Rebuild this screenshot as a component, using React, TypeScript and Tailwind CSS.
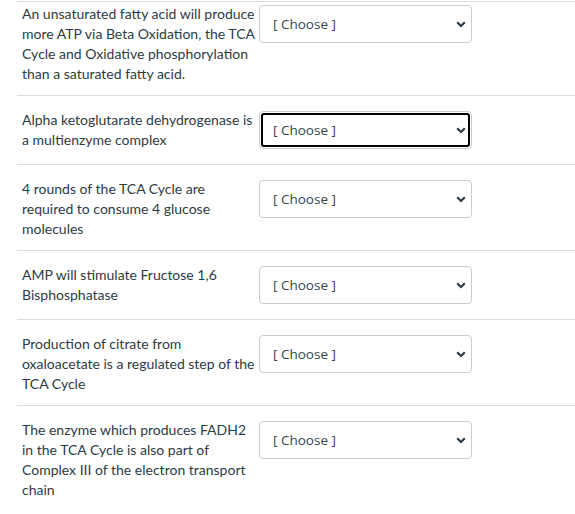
import React from "react";

const rows = [
  { text: "An unsaturated fatty acid will produce more ATP via Beta Oxidation, the TCA Cycle and Oxidative phosphorylation than a saturated fatty acid.", first: true },
  { text: "Alpha ketoglutarate dehydrogenase is a multienzyme complex", focus: true },
  { text: "4 rounds of the TCA Cycle are required to consume 4 glucose molecules" },
  { text: "AMP will stimulate Fructose 1,6 Bisphosphatase" },
  { text: "Production of citrate from oxaloacetate is a regulated step of the TCA Cycle" },
  { text: "The enzyme which produces FADH2 in the TCA Cycle is also part of Complex III of the electron transport chain" },
];

function Select({ focus }: { focus?: boolean }) {
  return (
    <div className="relative mt-px mb-[4px] h-[38px] w-[213px] shrink-0 rounded-[4px] border border-[#c7cdd1] bg-white">
      {focus && <div className="absolute inset-[1px] rounded-[3px] border-2 border-black" />}
      <span
        className="absolute left-[13px] top-[8px] text-[13.5px] leading-[20px] text-[#34444f]"
        style={{ fontFamily: '"Open Sans", sans-serif' }}
      >
        [ Choose ]
      </span>
      <svg className="absolute right-[5px] top-[15px]" width="10" height="7" viewBox="0 0 10 7">
        <path d="M1.2 1.3 L5 5 L8.8 1.3" fill="none" stroke="#2d3b45" strokeWidth="2.2" />
      </svg>
    </div>
  );
}

export default function App() {
  return (
    <div
      className="h-[514px] w-[575px] overflow-hidden bg-white pl-[17px] pt-px text-[#2d3b45]"
      style={{ fontFamily: 'Lato, "Noto Sans", sans-serif' }}
    >
      {rows.map((r, i) => (
        <div
          key={i}
          className={`flex items-start border-t border-[#dddddd] pl-[5px] pb-[11px] ${r.first ? "pt-[2px]" : "pt-[14px]"}`}
        >
          <div className="w-[237px] shrink-0 text-[14px] leading-[20px]">{r.text}</div>
          <Select focus={r.focus} />
        </div>
      ))}
    </div>
  );
}
